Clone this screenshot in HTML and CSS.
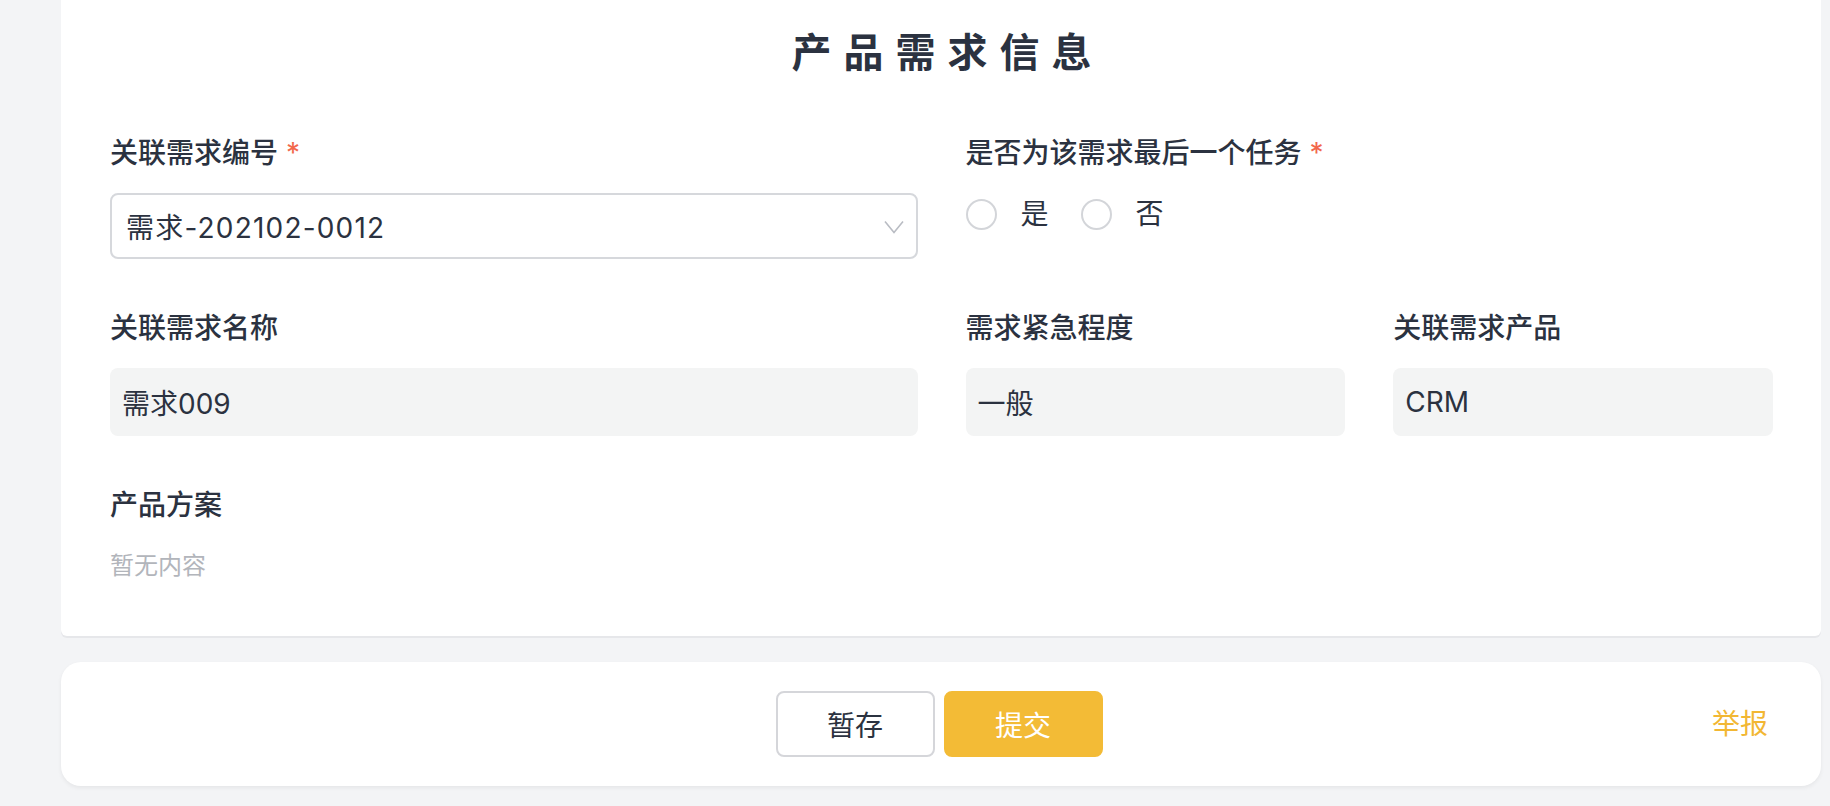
FILE: index.html
```html
<!DOCTYPE html>
<html lang="zh-CN">
<head>
<meta charset="utf-8">
<title>产品需求信息</title>
<link rel="stylesheet" href="styles.css">
</head>
<body>
<div class="page">
  <section class="card">
    <h2 class="title">产品需求信息</h2>
    <div class="form-grid">
      <div class="item span-2">
        <div class="label">关联需求编号<span class="req">*</span></div>
        <div class="select">
          <span class="select-value">需求-202102-0012</span>
          <svg class="chev" width="20" height="14" viewBox="0 0 20 14"><polyline points="1,1.5 10,12.5 19,1.5" fill="none" stroke="#b9bcc3" stroke-width="1.6"/></svg>
        </div>
      </div>
      <div class="item span-2">
        <div class="label">是否为该需求最后一个任务<span class="req">*</span></div>
        <div class="radios">
          <label class="radio"><span class="circle"></span><span class="radio-text">是</span></label>
          <label class="radio"><span class="circle"></span><span class="radio-text">否</span></label>
        </div>
      </div>
      <div class="item span-2">
        <div class="label">关联需求名称</div>
        <div class="readonly">需求009</div>
      </div>
      <div class="item">
        <div class="label">需求紧急程度</div>
        <div class="readonly">一般</div>
      </div>
      <div class="item">
        <div class="label">关联需求产品</div>
        <div class="readonly">CRM</div>
      </div>
      <div class="item span-4">
        <div class="label">产品方案</div>
        <div class="empty">暂无内容</div>
      </div>
    </div>
  </section>
  <footer class="footer">
    <div class="footer-left"></div>
    <div class="buttons">
      <button class="btn btn-default">暂存</button>
      <button class="btn btn-primary">提交</button>
    </div>
    <a class="report">举报</a>
  </footer>
</div>
</body>
</html>
```
FILE: styles.css
```css
* { box-sizing: border-box; }
html, body { margin: 0; padding: 0; }
body {
  background: #f3f4f6;
  font-family: "Inter", "Noto Sans CJK SC", sans-serif;
  color: #2b3240;
  width: 1830px;
  height: 806px;
  overflow: hidden;
}
.page {
  padding: 0 9px 20px 61px;
}
.card {
  background: #fff;
  padding: 33px 48px 58px 49px;
  border-radius: 0 0 6px 6px;
  box-shadow: 0 2px 0 #e6e7ea;
}
.title {
  margin: 0;
  text-align: center;
  font-size: 40px;
  line-height: 40px;
  font-weight: 700;
  letter-spacing: 12px;
  padding-left: 12px;
  color: #2b3240;
}
.form-grid {
  margin-top: 60px;
  display: grid;
  grid-template-columns: repeat(4, 1fr);
  column-gap: 48px;
  row-gap: 49px;
}
.span-2 { grid-column: span 2; }
.span-4 { grid-column: span 4; }
.label {
  font-size: 28px;
  line-height: 40px;
  font-weight: 500;
  color: #2b3240;
  white-space: nowrap;
}
.req {
  color: #f2684c;
  margin-left: 8px;
  font-weight: 400;
}
.select {
  margin-top: 20px;
  height: 66px;
  border: 2px solid #d6d8dc;
  border-radius: 8px;
  display: flex;
  align-items: center;
  justify-content: space-between;
  padding: 0 12px 0 14px;
  font-size: 28px;
}
.select-value { letter-spacing: 1.2px; }
.chev { display: block; margin-top: 2px; }
.radios {
  margin-top: 26px;
  display: flex;
  align-items: center;
  height: 30px;
  gap: 32px;
}
.radio {
  display: flex;
  align-items: center;
  gap: 24px;
}
.circle {
  width: 31px;
  height: 31px;
  border: 2px solid #d3d5d9;
  border-radius: 50%;
  background: #fff;
}
.radio-text {
  font-size: 28px;
  line-height: 30px;
}
.readonly {
  margin-top: 20px;
  height: 68px;
  background: #f3f4f4;
  border-radius: 8px;
  display: flex;
  align-items: center;
  padding: 0 12px;
  font-size: 28px;
}
.empty {
  margin-top: 29px;
  font-size: 24px;
  line-height: 24px;
  color: #b2b5bb;
}
.footer {
  margin-top: 26px;
  background: #fff;
  border-radius: 20px;
  box-shadow: 0 2px 4px rgba(0, 0, 0, 0.06);
  padding: 29px 53px 29px 49px;
  display: grid;
  grid-template-columns: 1fr auto 1fr;
  align-items: center;
}
.buttons {
  display: flex;
  gap: 9px;
}
.btn {
  width: 159px;
  height: 66px;
  border-radius: 8px;
  font-family: "Inter", "Noto Sans CJK SC", sans-serif;
  font-size: 28px;
  cursor: pointer;
}
.btn-default {
  background: #fff;
  border: 2px solid #d5d6da;
  color: #2b3240;
}
.btn-primary {
  background: #f3bb36;
  border: 2px solid #f3bb36;
  color: #fff;
}
.report {
  justify-self: end;
  font-size: 28px;
  line-height: 40px;
  color: #f2b733;
  cursor: pointer;
}
```
